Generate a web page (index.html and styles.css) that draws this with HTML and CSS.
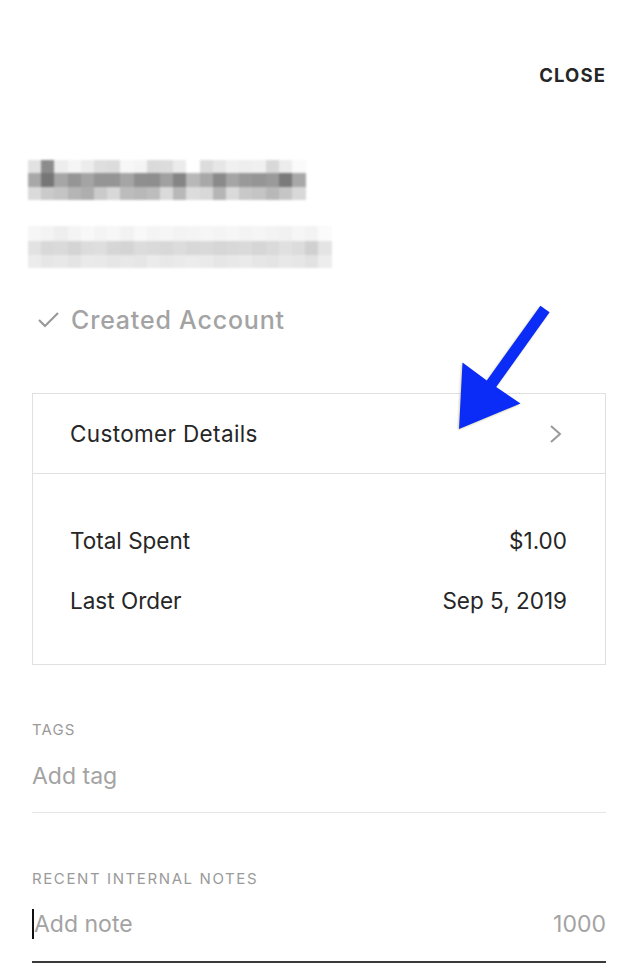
FILE: index.html
```html
<!DOCTYPE html>
<html lang="en">
<head>
<meta charset="utf-8">
<title>Customer</title>
<link rel="stylesheet" href="styles.css">
</head>
<body>
<main class="panel">
  <header class="top">
    <a class="close">CLOSE</a>
  </header>

  <div class="identity">
    <div class="blur name"><i class="a"></i><i class="b"></i><i class="c"></i></div>
    <div class="blur email"><i class="a"></i><i class="b"></i><i class="c"></i></div>
  </div>

  <div class="status">
    <svg class="check" width="24" height="20" viewBox="0 0 24 20"><polyline points="2,9 8,15 21,2" fill="none" stroke="#9a9a9a" stroke-width="2.2"/></svg>
    <span>Created Account</span>
  </div>

  <section class="card">
    <div class="card-head">
      <span>Customer Details</span>
      <svg class="chev" width="14" height="18" viewBox="0 0 14 18"><polyline points="2,1 11,9 2,17" fill="none" stroke="#999" stroke-width="2"/></svg>
    </div>
    <div class="card-body">
      <div class="stat"><span>Total Spent</span><span>$1.00</span></div>
      <div class="stat"><span>Last Order</span><span>Sep 5, 2019</span></div>
    </div>
  </section>

  <section class="field tags">
    <div class="label">TAGS</div>
    <div class="input">Add tag</div>
  </section>

  <section class="field notes">
    <div class="label">RECENT INTERNAL NOTES</div>
    <div class="input active"><span class="caret"></span><span class="ph">Add note</span><span class="count">1000</span></div>
  </section>
</main>

<svg class="arrow" width="634" height="974" viewBox="0 0 634 974">
  <polygon points="459,429 462.5,362.5 486.8,380.4 540.4,305.7 549.6,312.3 496.2,387 520.5,403.5" fill="#0a2cf6"/>
</svg>
</body>
</html>
```

FILE: styles.css
```css
* { box-sizing: border-box; }
html, body { margin: 0; padding: 0; background: #fff; }
body {
  width: 634px;
  height: 974px;
  overflow: hidden;
  position: relative;
  font-family: Inter, "Liberation Sans", Arial, sans-serif;
  color: #2a2a2a;
}
.panel {
  padding: 0 28px 0 32px;
}
.top {
  padding-top: 63px;
  display: flex;
  justify-content: flex-end;
  line-height: 24px;
}
.close {
  font-size: 18.5px;
  font-weight: 700;
  letter-spacing: 1.1px;
  color: #262626;
}

.identity { margin-left: -4px; }
.blur { display: flex; flex-direction: column; filter: blur(0.8px); }
.blur i { display: block; }
.name { margin-top: 73px; width: 278px; height: 40px; }
.name .a { height: 13px; background: linear-gradient(to right, #e2e2e2 0 13.2px, #8c8c8c 0 26.4px, #ededed 0 39.6px, #f5f5f5 0 52.8px, #ececec 0 66px, #dedede 0 79.2px, #dcdcdc 0 92.4px, #f7f7f7 0 105.6px, #f4f4f4 0 118.8px, #dadada 0 132px, #dcdcdc 0 145.2px, #ebebeb 0 158.4px, #fff 0 171.6px, #dcdcdc 0 184.8px, #e6e6e6 0 198px, #f0f0f0 0 211.2px, #eee 0 224.4px, #f0f0f0 0 237.6px, #d8d8d8 0 250.8px, #ececec 0 264px, #fafafa 0 278px); }
.name .b { height: 14px; background: linear-gradient(to right, #a8a8a8 0 13.2px, #767676 0 26.4px, #a6a6a6 0 39.6px, #959595 0 52.8px, #a4a4a4 0 66px, #959595 0 79.2px, #959595 0 92.4px, #a5a5a5 0 105.6px, #8f8f8f 0 118.8px, #8e8e8e 0 132px, #a0a0a0 0 145.2px, #858585 0 158.4px, #b8b8b8 0 171.6px, #a8a8a8 0 184.8px, #8a8a8a 0 198px, #a5a5a5 0 211.2px, #999 0 224.4px, #959595 0 237.6px, #9a9a9a 0 250.8px, #7a7a7a 0 264px, #a8a8a8 0 278px); }
.name .c { height: 13px; background: linear-gradient(to right, #dadada 0 13.2px, #cacaca 0 26.4px, #c4c4c4 0 39.6px, #b5b5b5 0 52.8px, #aeaeae 0 66px, #cacaca 0 79.2px, #d8d8d8 0 92.4px, #bcbcbc 0 105.6px, #b8b8b8 0 118.8px, #bdbdbd 0 132px, #dadada 0 145.2px, #b8b8b8 0 158.4px, #dcdcdc 0 171.6px, #d8d8d8 0 184.8px, #b5b5b5 0 198px, #dadada 0 211.2px, #c8c8c8 0 224.4px, #c4c4c4 0 237.6px, #b8b8b8 0 250.8px, #c5c5c5 0 264px, #d8d8d8 0 278px); }

.email { margin-top: 26px; width: 304px; height: 42px; }
.email .a { height: 15px; background: linear-gradient(to right, #f6f6f6 0 13.2px, #f3f3f3 0 26.4px, #eee 0 39.6px, #f4f4f4 0 52.8px, #f8f8f8 0 66px, #f4f4f4 0 79.2px, #f7f7f7 0 92.4px, #f2f2f2 0 105.6px, #f8f8f8 0 118.8px, #f4f4f4 0 132px, #f6f6f6 0 145.2px, #f3f3f3 0 158.4px, #f4f4f4 0 171.6px, #f6f6f6 0 184.8px, #f4f4f4 0 198px, #f6f6f6 0 211.2px, #f3f3f3 0 224.4px, #f5f5f5 0 237.6px, #f3f3f3 0 250.8px, #f1f1f1 0 264px, #f6f6f6 0 277.2px, #f3f3f3 0 290.4px, #fbfbfb 0 304px); }
.email .b { height: 14px; background: linear-gradient(to right, #e2e2e2 0 13.2px, #d8d8d8 0 26.4px, #dadada 0 39.6px, #d4d4d4 0 52.8px, #dcdcdc 0 66px, #dedede 0 79.2px, #d6d6d6 0 92.4px, #d4d4d4 0 105.6px, #dcdcdc 0 118.8px, #dadada 0 132px, #d8d8d8 0 145.2px, #dcdcdc 0 158.4px, #d8d8d8 0 171.6px, #d9d9d9 0 184.8px, #d6d6d6 0 198px, #d8d8d8 0 211.2px, #dadada 0 224.4px, #d6d6d6 0 237.6px, #dadada 0 250.8px, #e0e0e0 0 264px, #dcdcdc 0 277.2px, #d0d0d0 0 290.4px, #e4e4e4 0 304px); }
.email .c { height: 13px; background: linear-gradient(to right, #ececec 0 13.2px, #e6e6e6 0 26.4px, #e8e8e8 0 39.6px, #e4e4e4 0 52.8px, #eaeaea 0 66px, #e9e9e9 0 79.2px, #e6e6e6 0 92.4px, #e8e8e8 0 105.6px, #e6e6e6 0 118.8px, #ebebeb 0 132px, #e8e8e8 0 145.2px, #eaeaea 0 158.4px, #ececec 0 171.6px, #eaeaea 0 184.8px, #e6e6e6 0 198px, #e8e8e8 0 211.2px, #eaeaea 0 224.4px, #e6e6e6 0 237.6px, #e4e4e4 0 250.8px, #e8e8e8 0 264px, #e6e6e6 0 277.2px, #e2e2e2 0 290.4px, #ededed 0 304px); }

.status {
  margin-top: 36px;
  display: flex;
  align-items: center;
  gap: 10px;
  font-size: 25px;
  font-weight: 500;
  letter-spacing: 0.8px;
  line-height: 32px;
  color: #a3a3a3;
}
.check { margin-left: 5px; margin-top: 1px; }

.card {
  margin-top: 57px;
  border: 1px solid #e0e0e0;
}
.card-head {
  height: 80px;
  border-bottom: 1px solid #e0e0e0;
  display: flex;
  align-items: center;
  justify-content: space-between;
  padding: 0 42px 0 37px;
  font-size: 22.5px;
  letter-spacing: 0.35px;
  color: #262626;
}
.chev { margin-top: 1px; }
.card-body {
  padding: 36px 38px 34px 37px;
}
.stat {
  height: 60px;
  display: flex;
  align-items: center;
  justify-content: space-between;
  font-size: 22.5px;
  color: #262626;
}

.field { margin-top: 55px; }
.label {
  font-size: 15px;
  line-height: 20px;
  letter-spacing: 1.1px;
  color: #9a9a9a;
}
.notes .label { letter-spacing: 1.6px; }
.input {
  margin-top: 22px;
  font-size: 23px;
  line-height: 28px;
  color: #a3a3a3;
  padding-bottom: 22px;
  border-bottom: 1px solid #e6e6e6;
  display: flex;
  align-items: center;
}
.notes { margin-top: 56px; }
.notes .input {
  margin-top: 20px;
  padding-bottom: 22px;
  border-bottom: 2px solid #3a3a3a;
}
.caret {
  width: 2px;
  height: 30px;
  background: #111;
}
.ph { flex: 1; }
.count { color: #a3a3a3; }

.arrow {
  position: absolute;
  left: 0;
  top: 0;
  pointer-events: none;
  filter: drop-shadow(-1px 1px 1px rgba(120, 110, 0, 0.35));
}
```
